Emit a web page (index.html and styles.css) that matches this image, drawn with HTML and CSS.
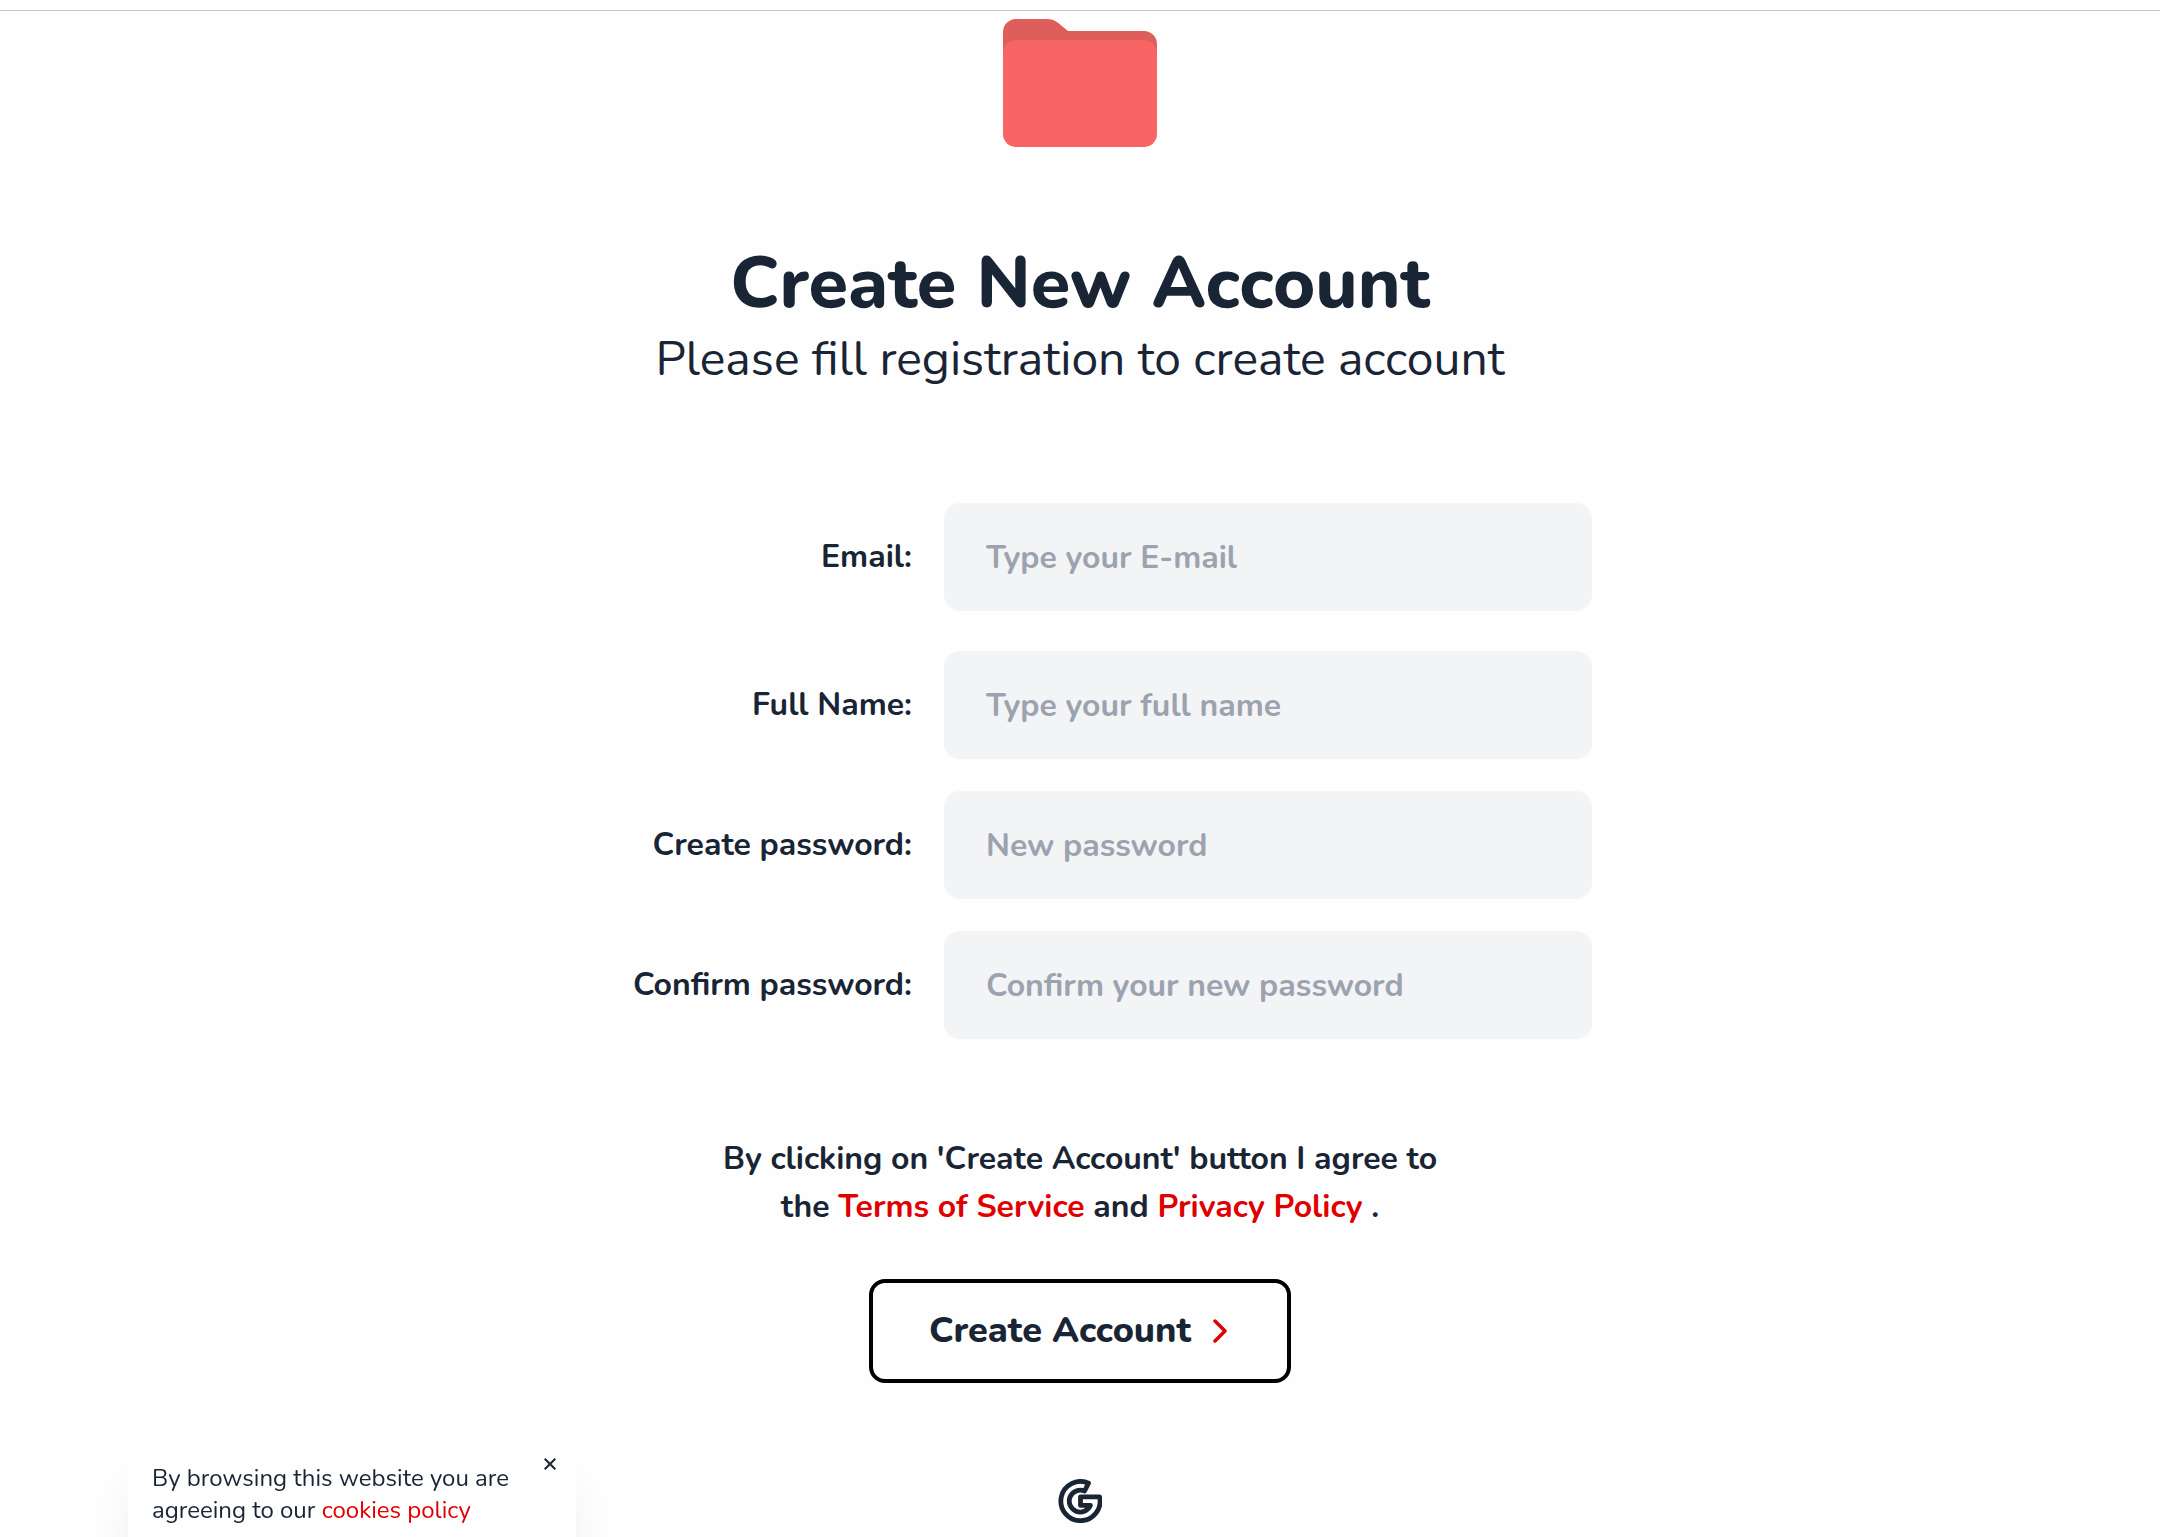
FILE: index.html
```html
<!DOCTYPE html>
<html lang="en">
<head>
  <meta charset="UTF-8" />
  <meta name="viewport" content="width=device-width, initial-scale=1.0"/>
  <title>Create New Account</title>
  <link rel="stylesheet" href="styles.css">
</head>
<body>
  <header class="topbar"></header>

  <main class="container">
    <svg class="folder" viewBox="0 0 154 128" aria-hidden="true">
      <path fill="#dd5e5b" d="M13 0H45Q50 0 54 3L65 12H141A13 13 0 0 1 154 25V60H0V13A13 13 0 0 1 13 0Z"/>
      <rect fill="#f96464" y="21" width="154" height="107" rx="13"/>
    </svg>

    <h1>Create New Account</h1>
    <p class="subtitle">Please fill registration to create account</p>

    <form id="registerForm">
      <div class="field field-email">
        <label for="email">Email:</label>
        <input type="email" id="email" placeholder="Type your E-mail" required />
      </div>
      <div class="field">
        <label for="fullName">Full Name:</label>
        <input type="text" id="fullName" placeholder="Type your full name" required />
      </div>
      <div class="field">
        <label for="password">Create password:</label>
        <input type="password" id="password" placeholder="New password" required />
      </div>
      <div class="field">
        <label for="confirm">Confirm password:</label>
        <input type="password" id="confirm" placeholder="Confirm your new password" required />
      </div>

      <p class="terms">
        By clicking on 'Create Account' button I agree to<br>
        the <a href="#terms">Terms of Service</a> and <a href="#privacy">Privacy Policy</a> .
      </p>

      <button type="submit" class="btn-create">
        Create Account
        <svg class="chevron" viewBox="0 0 14 24" aria-hidden="true">
          <path d="M2 2L12 12L2 22"/>
        </svg>
      </button>
    </form>
  </main>

  <footer>
    <svg class="logo" viewBox="0 0 44 44" role="img" aria-label="G">
      <path d="M30.5 4.2A19.6 19.6 0 1 0 41.6 17.8H22.5V26.4H32.4A11 11 0 1 1 26.6 12Z"/>
    </svg>
  </footer>

  <aside class="cookies">
    <p>By browsing this website you are<br>agreeing to our <a href="#cookies">cookies policy</a></p>
    <button type="button" class="btn-close" aria-label="Close">
      <svg viewBox="0 0 12 12" aria-hidden="true">
        <path d="M0.7 0.7L11.3 11.3M11.3 0.7L0.7 11.3"/>
      </svg>
    </button>
  </aside>
</body>
</html>
```

FILE: styles.css
```css
* {
  box-sizing: border-box;
}
body {
  margin: 0;
  font-family: Nunito, "Open Sans", sans-serif;
  font-size: 32px;
  line-height: 48px;
  color: #192434;
  background: #fefefe;
}
a {
  color: #e00000;
  text-decoration: none;
}
.topbar {
  height: 11px;
  border-bottom: 1px solid #c8c8c8;
}
.container {
  max-width: 1024px;
  margin: 0 auto;
  padding-top: 8px;
  text-align: center;
}
.folder {
  display: block;
  width: 154px;
  margin: 0 auto;
}
h1 {
  margin: 96px 0 0;
  font-size: 72px;
  font-weight: 800;
  line-height: 80px;
}
.subtitle {
  margin: 0;
  font-size: 48px;
  font-weight: 400;
  line-height: 72px;
}
form {
  margin-top: 108px;
}
.field {
  display: grid;
  grid-template-columns: 1fr 648px;
  gap: 32px;
  align-items: center;
  margin-bottom: 32px;
}
.field-email {
  margin-bottom: 40px;
}
label {
  text-align: right;
  font-weight: 700;
}
input {
  width: 100%;
  height: 108px;
  padding: 0 42px;
  border: none;
  border-radius: 16px;
  background: #f3f4f6;
  color: inherit;
  font: inherit;
  font-weight: 700;
}
input::placeholder {
  color: #9ca3af;
  opacity: 1;
}
.terms {
  margin: 96px 0 48px;
  font-weight: 700;
}
.btn-create {
  display: inline-flex;
  align-items: center;
  gap: 22px;
  height: 104px;
  padding: 0 60px 0 56px;
  border: 4px solid #000;
  border-radius: 16px;
  background: transparent;
  color: inherit;
  font: inherit;
  font-size: 36px;
  font-weight: 800;
  cursor: pointer;
}
.chevron {
  width: 14px;
  fill: none;
  stroke: #e00000;
  stroke-width: 3.5;
  stroke-linecap: round;
  stroke-linejoin: round;
}
footer {
  display: flex;
  justify-content: center;
  padding: 96px 0 14px;
}
.logo {
  width: 44px;
  fill: none;
  stroke: #192434;
  stroke-width: 4.8;
  stroke-linejoin: round;
}
/* cookie notice over the page, bottom left */
.cookies {
  position: fixed;
  left: 128px;
  bottom: 0;
  display: flex;
  align-items: flex-start;
  justify-content: space-between;
  width: 448px;
  padding: 8px 20px 11px 24px;
  background: #fefefe;
  box-shadow: 0 40px 40px rgba(0, 0, 0, 0.06);
  font-size: 24px;
  line-height: 32px;
}
.cookies p {
  margin: 4px 0 0;
}
.btn-close {
  display: flex;
  padding: 0;
  border: none;
  background: none;
  cursor: pointer;
}
.btn-close svg {
  width: 12px;
  stroke: #192434;
  stroke-width: 2;
}
```
